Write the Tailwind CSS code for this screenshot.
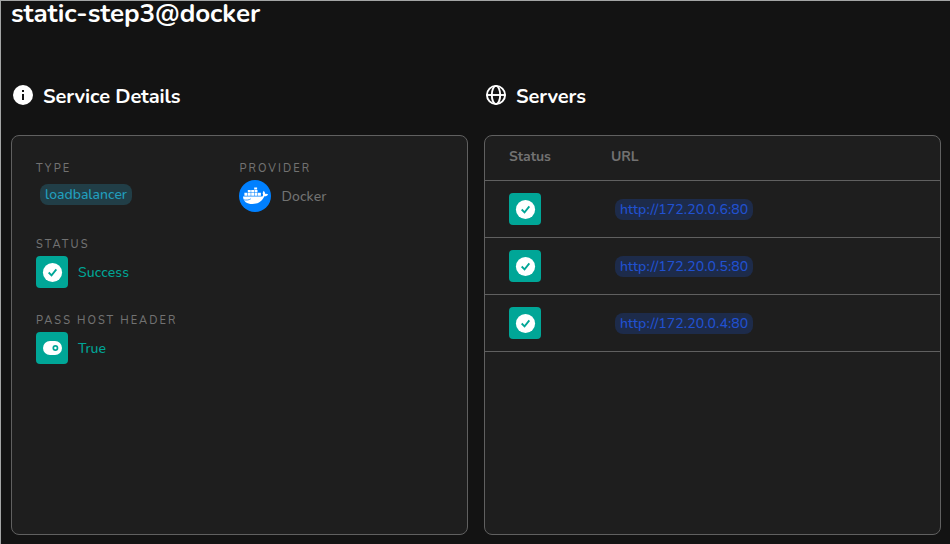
<!DOCTYPE html>
<html lang="en">
<head>
<meta charset="utf-8">
<title>static-step3@docker</title>
<script src="https://cdn.jsdelivr.net/npm/@tailwindcss/browser@4"></script>
</head>
<body class="w-[950px] h-[544px] overflow-hidden bg-[#131313] font-['Nunito','Lato',sans-serif] text-[14px] font-medium text-[#727272]">
<svg class="hidden">
  <symbol id="check" viewBox="0 0 24 24"><path fill="#fff" d="M12 2a10 10 0 1 0 0 20 10 10 0 0 0 0-20z"/><path fill="none" stroke="#00a697" stroke-width="1.9" stroke-linejoin="miter" d="M8 12l3 3 5-6.2"/></symbol>
</svg>
<main class="h-[544px] border-t border-l border-[#a3a5a5] pl-[10px] pr-[9px] flex flex-col">
  <h1 class="h-[82px] text-[26px] leading-[26px] font-bold tracking-[-0.07px] text-white whitespace-nowrap">static-step3@docker</h1>
  <div class="grid grid-cols-2 gap-4">
    <section>
      <h2 class="h-[52px] flex items-start text-white text-[20px] leading-[28px] font-bold tracking-[-0.1px]">
        <svg class="size-6 shrink-0 mr-2" viewBox="0 0 24 24"><circle cx="12" cy="12" r="10" fill="#fff"/><path fill="#131313" d="M11 7h2v2h-2zM11 11h2v6h-2z"/></svg>
        <span>Service Details</span>
      </h2>
      <div class="h-[400px] rounded-lg border border-[#606060] bg-[#1e1e1e] px-6 pt-[24px]">
        <div class="grid grid-cols-2 h-[76px]">
          <div>
            <div class="text-[11px] h-4 leading-[18px] tracking-[2.05px]">TYPE</div>
            <div class="ml-1 mt-[8px] inline-flex h-[21px] items-center rounded-lg bg-[#213e47] px-[5px] text-[#219fbd]">loadbalancer</div>
          </div>
          <div>
            <div class="text-[11px] h-4 leading-[18px] tracking-[2.05px]">PROVIDER</div>
            <div class="flex items-center mt-1 -ml-[0.5px]">
              <svg class="size-8 mr-[10.5px]" viewBox="0 0 32 32"><circle cx="16" cy="16" r="16" fill="#0080ff"/><path fill="#fff" d="M4 16.5h19.2c1-.5 1-2 .4-3.2l1-2.6c1 .7 1.5 2 1.6 3.2 1.1-.2 2 0 2.9.4-.7 1.5-1.8 2.1-3.7 2-2.2 5-6 7.7-12 7.7-5.5 0-9.2-2.4-9.4-7.5z"/><path fill="#fff" d="M5.4 12.8h2.9v2.9H5.4zM8.8 12.8h2.9v2.9H8.8zM12.2 12.8h2.9v2.9h-2.9zM15.6 12.8h2.9v2.9h-2.9zM19 12.8h2.9v2.9H19zM8.8 10h2.9v2.3H8.8zM12.2 10h2.9v2.3h-2.9zM15.6 10h2.9v2.3h-2.9zM15.2 7.5h2.9v2h-2.9z"/><path stroke="#0080ff" stroke-width=".7" fill="none" d="M4.5 19.8c3.2.6 5.5.2 7.3-1"/></svg>
              <span class="tracking-[0.1px]">Docker</span>
            </div>
          </div>
        </div>
        <div class="h-[76px]">
          <div class="text-[11px] h-4 leading-[18px] tracking-[2.05px]">STATUS</div>
          <div class="flex items-center mt-1 text-[#00a697]">
            <div class="size-8 rounded bg-[#00a697] flex items-center justify-center mr-[10px]"><svg class="size-[23px] ml-px"><use href="#check"/></svg></div>
            <span class="tracking-[0.1px]">Success</span>
          </div>
        </div>
        <div>
          <div class="text-[11px] h-4 leading-[18px] tracking-[2.05px]">PASS HOST HEADER</div>
          <div class="flex items-center mt-1 text-[#00a697]">
            <div class="size-8 rounded bg-[#00a697] flex items-center justify-center mr-[10px]"><svg class="size-[22px]" viewBox="0 0 22 22"><rect x="2" y="4" width="19" height="14" rx="7" fill="#fff"/><circle cx="14.4" cy="11" r="2.1" fill="#fff" stroke="#00a697" stroke-width="1.7"/></svg></div>
            <span>True</span>
          </div>
        </div>
      </div>
    </section>
    <section>
      <h2 class="h-[52px] flex items-start text-white text-[20px] leading-[28px] font-bold tracking-[-0.1px]">
        <svg class="size-6 shrink-0 mr-2" viewBox="0 0 24 24" fill="none" stroke="#fff" stroke-width="1.9"><circle cx="12" cy="12" r="9.1"/><ellipse cx="12" cy="12" rx="4.2" ry="9.1"/><path d="M3 12h18"/></svg>
        <span>Servers</span>
      </h2>
      <div class="h-[400px] rounded-lg border border-[#606060] bg-[#1e1e1e]">
        <div class="h-[45px] border-b border-[#606060] flex items-center px-6 font-bold tracking-[-0.05px] pb-[3px]"><div class="w-[102px]">Status</div><span>URL</span></div>
        <div class="h-[57px] border-b border-[#606060] flex items-center px-6"><div class="size-8 rounded bg-[#00a697] flex items-center justify-center mr-[74px]"><svg class="size-[23px] ml-px"><use href="#check"/></svg></div><div class="flex h-[21px] items-center rounded-lg bg-[#1d2b4a] px-[5px] text-[#2151d0] tracking-[0.1px]">http://172.20.0.6:80</div></div>
        <div class="h-[57px] border-b border-[#606060] flex items-center px-6"><div class="size-8 rounded bg-[#00a697] flex items-center justify-center mr-[74px]"><svg class="size-[23px] ml-px"><use href="#check"/></svg></div><div class="flex h-[21px] items-center rounded-lg bg-[#1d2b4a] px-[5px] text-[#2151d0] tracking-[0.1px]">http://172.20.0.5:80</div></div>
        <div class="h-[57px] border-b border-[#606060] flex items-center px-6"><div class="size-8 rounded bg-[#00a697] flex items-center justify-center mr-[74px]"><svg class="size-[23px] ml-px"><use href="#check"/></svg></div><div class="flex h-[21px] items-center rounded-lg bg-[#1d2b4a] px-[5px] text-[#2151d0] tracking-[0.1px]">http://172.20.0.4:80</div></div>
      </div>
    </section>
  </div>
</main>
</body>
</html>
